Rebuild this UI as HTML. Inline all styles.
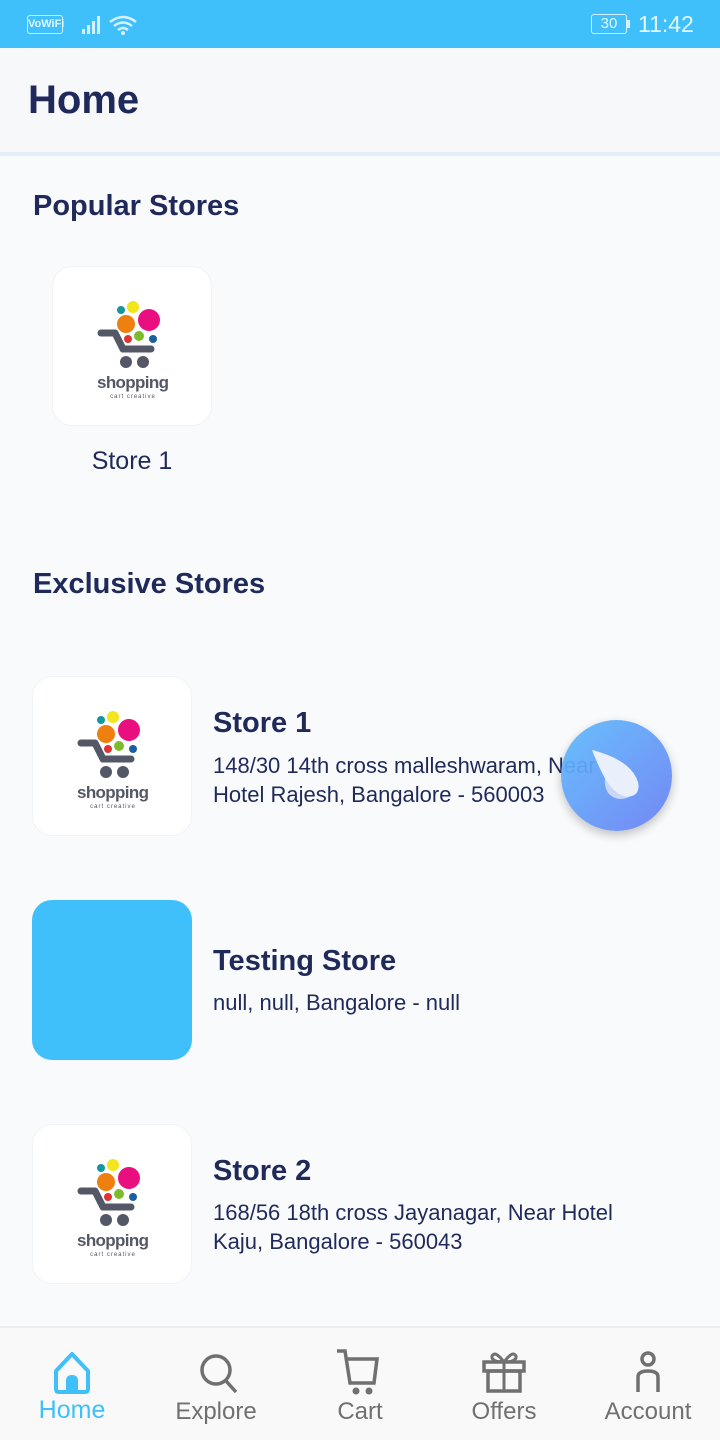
<!DOCTYPE html>
<html><head><meta charset="utf-8"><style>
*{margin:0;padding:0;box-sizing:border-box}
body{width:720px;height:1440px;background:#f9fafb;font-family:"Liberation Sans",Roboto,sans-serif;position:relative;overflow:hidden;color:#1f2a5a}
.sb{position:absolute;top:0;left:0;width:720px;height:48px;background:#40c0fb;color:#e6f6ff}
.hdr{position:absolute;top:48px;left:0;width:720px;height:108px;background:#f7f8fa;border-bottom:4px solid #e5edf8}
.hdr h1{position:absolute;left:28px;top:30px;font-size:40px;font-weight:bold;color:#1f2a5a}
.h2{position:absolute;left:33px;font-size:29px;font-weight:bold;color:#1f2a5a}
.box{position:absolute;width:160px;height:160px;border-radius:20px;background:#fff;border:1px solid #eef3f7}
.name{position:absolute;left:213px;font-size:29px;font-weight:bold}
.addr{position:absolute;left:213px;font-size:22px;line-height:29px;color:#1f2a5a}
.nav{position:absolute;top:1326px;left:0;width:720px;height:114px;background:#f9f9f9;border-top:2px solid #eeeeee}
.it{position:absolute;top:70px;width:144px;text-align:center;font-size:24px;color:#707070}
</style></head><body>
<svg width="0" height="0" style="position:absolute"><defs>
<g id="logo">
<circle cx="68" cy="43" r="4" fill="#16969e"/><circle cx="80" cy="40" r="6" fill="#f3e51c"/>
<circle cx="73" cy="57" r="9" fill="#ef7f0f"/><circle cx="96" cy="53" r="11" fill="#ea0f7e"/>
<circle cx="75" cy="72" r="4" fill="#e03434"/><circle cx="86" cy="69" r="5" fill="#7cbc2c"/><circle cx="100" cy="72" r="4" fill="#1a5fa0"/>
<path d="M48 66 H62 L70 82 H98" stroke="#545766" stroke-width="7" fill="none" stroke-linecap="round" stroke-linejoin="round"/>
<circle cx="73" cy="95" r="6" fill="#545766"/><circle cx="90" cy="95" r="6" fill="#545766"/>
<text x="80" y="121" text-anchor="middle" font-family="Liberation Sans,sans-serif" font-size="17" font-weight="bold" fill="#545766" textLength="72">shopping</text>
<text x="80" y="131" text-anchor="middle" font-family="Liberation Sans,sans-serif" font-size="6" fill="#545766" letter-spacing="1">cart creative</text>
</g></defs></svg>
<div class="sb">
<div style="position:absolute;left:27px;top:15px;width:36px;height:19px;border:1px solid #d5f0ff;border-radius:3px;font-size:11px;font-weight:bold;text-align:center;line-height:17px">VoWiFi</div>
<svg style="position:absolute;left:80px;top:13px" width="60" height="24"><g fill="#d5f0ff"><rect x="2" y="16" width="3" height="5"/><rect x="7" y="12" width="3" height="9"/><rect x="12" y="8" width="3" height="13"/><rect x="17" y="3" width="3" height="18"/></g><path d="M30 9 Q43 -1 56 9 M34 13 Q43 6 52 13 M38 17 Q43 13 48 17" stroke="#d5f0ff" stroke-width="2.5" fill="none"/><circle cx="43" cy="20" r="2" fill="#d5f0ff"/></svg>
<div style="position:absolute;left:591px;top:14px;width:36px;height:20px;border:1.5px solid #d5f0ff;border-radius:3px;font-size:15px;text-align:center;line-height:17px">30</div>
<div style="position:absolute;left:627px;top:20px;width:3px;height:8px;background:#d5f0ff"></div>
<div style="position:absolute;left:638px;top:11px;font-size:23px">11:42</div>
</div>
<div class="hdr"><h1>Home</h1></div>
<div class="h2" style="top:190px">Popular Stores</div>
<div class="box" style="left:52px;top:266px"><svg width="160" height="160"><use href="#logo"/></svg></div>
<div style="position:absolute;left:52px;top:447px;width:160px;text-align:center;font-size:25px">Store 1</div>
<div class="h2" style="top:568px">Exclusive Stores</div>
<div class="box" style="left:32px;top:676px"><svg width="160" height="160"><use href="#logo"/></svg></div>
<div class="name" style="top:707px">Store 1</div>
<div class="addr" style="top:751px">148/30 14th cross malleshwaram, Near<br>Hotel Rajesh, Bangalore - 560003</div>
<div class="box" style="left:32px;top:900px;background:#40c0fb;border:none"></div>
<div class="name" style="top:945px">Testing Store</div>
<div class="addr" style="top:988px">null, null, Bangalore - null</div>
<div class="box" style="left:32px;top:1124px"><svg width="160" height="160"><use href="#logo"/></svg></div>
<div class="name" style="top:1155px">Store 2</div>
<div class="addr" style="top:1198px">168/56 18th cross Jayanagar, Near Hotel<br>Kaju, Bangalore - 560043</div>
<div style="position:absolute;left:561px;top:720px;width:111px;height:111px;border-radius:50%;background:linear-gradient(135deg,#5ebcfc,#6a7ff5);box-shadow:0 4px 10px rgba(0,0,0,.25);opacity:.93">
<svg width="111" height="111"><path d="M31 30 Q70 40 77 62 Q80 76 66 77 Q52 76 46 62 Q38 48 31 30Z" fill="#e8f0fd"/><path d="M44 58 Q54 76 68 77 Q56 82 48 74 Q43 68 44 58Z" fill="#c7d6f8"/></svg></div>
<div class="nav">
<svg style="position:absolute;left:52px;top:23px" width="40" height="44"><path d="M4 20 L20 3 L36 20 V38 Q36 41 33 41 H7 Q4 41 4 38Z" stroke="#40c0fb" stroke-width="4" fill="none" stroke-linejoin="round"/><path d="M14 41 V30 Q14 24 20 24 Q26 24 26 30 V41Z" fill="#40c0fb"/></svg>
<svg style="position:absolute;left:198px;top:24px" width="44" height="44"><circle cx="18" cy="18" r="14" stroke="#707070" stroke-width="3.5" fill="none"/><path d="M28 29 L38 40" stroke="#707070" stroke-width="3.5"/></svg>
<svg style="position:absolute;left:336px;top:20px" width="50" height="48"><path d="M1 3 H9 L14 35 H38 L41 11 H10" stroke="#707070" stroke-width="3.5" fill="none"/><circle cx="20" cy="43" r="3.5" fill="#707070"/><circle cx="33" cy="43" r="3.5" fill="#707070"/></svg>
<svg style="position:absolute;left:481px;top:20px" width="46" height="48"><rect x="3" y="14" width="40" height="9" stroke="#707070" stroke-width="3.5" fill="none"/><rect x="7" y="23" width="32" height="20" stroke="#707070" stroke-width="3.5" fill="none"/><path d="M23 14 V43 M23 14 Q14 2 11 8 Q10 14 23 14 Q32 2 35 8 Q36 14 23 14" stroke="#707070" stroke-width="3" fill="none"/></svg>
<svg style="position:absolute;left:634px;top:22px" width="30" height="46"><circle cx="14" cy="9" r="6" stroke="#707070" stroke-width="3.5" fill="none"/><path d="M4 42 V27 Q4 21 14 21 Q24 21 24 27 V42" stroke="#707070" stroke-width="3.5" fill="none"/></svg>
<div class="it" style="left:0;top:68px;color:#40c0fb;font-size:25px">Home</div>
<div class="it" style="left:144px">Explore</div>
<div class="it" style="left:288px">Cart</div>
<div class="it" style="left:432px">Offers</div>
<div class="it" style="left:576px">Account</div>
</div>
</body></html>
